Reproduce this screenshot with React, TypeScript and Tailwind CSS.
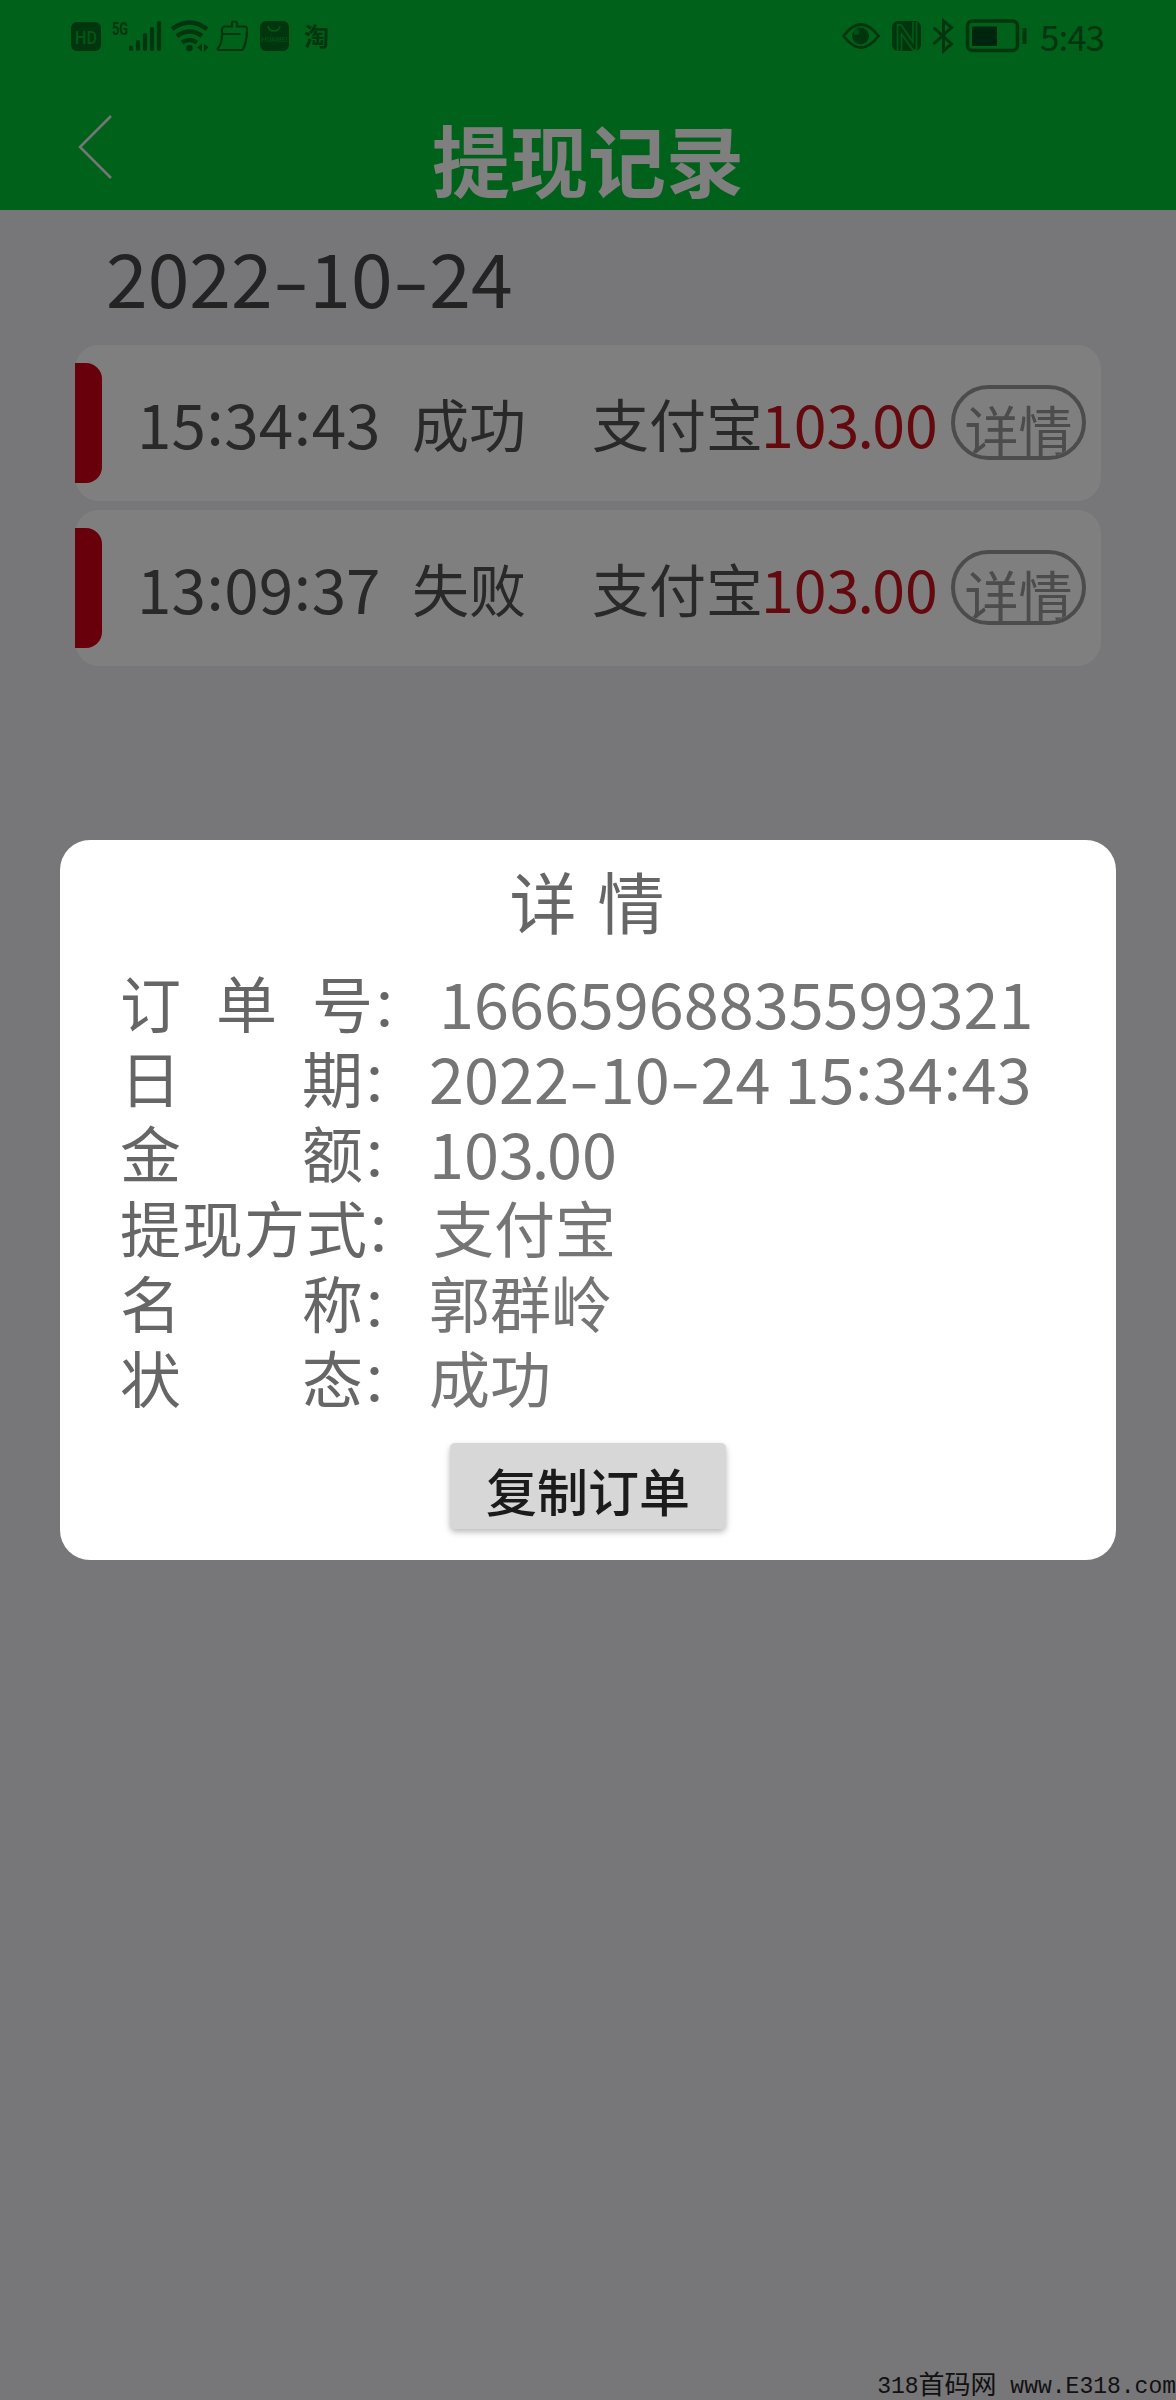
import React from "react";

const records = [
  { time: "15:34:43", status: "成功", method: "支付宝", amount: "103.00" },
  { time: "13:09:37", status: "失败", method: "支付宝", amount: "103.00" },
];

// Punctuation between digits gets its own width, and colons are raised
function Digits({ text }: { text: string }) {
  return (
    <>
      {text.split("").map((c, i) => {
        if (c === ":") {
          return (
            <span key={i} className="inline-block w-[18.5px] text-center align-[0.06em] leading-none">
              :
            </span>
          );
        }
        if (c === ".") {
          return (
            <span key={i} className="inline-flex w-[13px] justify-center leading-none">
              .
            </span>
          );
        }
        if (c === "-") {
          return (
            <span key={i} className="inline-block w-[0.49em] text-center leading-none">
              <span className="inline-block scale-x-140">-</span>
            </span>
          );
        }
        return <span key={i}>{c}</span>;
      })}
    </>
  );
}

function StatusBar() {
  return (
    <div className="flex h-[72px] items-center justify-between pl-[71px] pr-[72px] text-[#006a1a]">
      <svg width="262" height="40" viewBox="71 16 262 40" fill="none" stroke="currentColor">
        <rect x="71" y="22" width="30" height="29" rx="6" fill="currentColor" stroke="none" />
        <text x="86" y="43.500" textAnchor="middle" fontSize="19" fontFamily="Roboto, sans-serif" fontWeight="500" textLength="22" lengthAdjust="spacingAndGlyphs" fill="#00b02f" stroke="none">
          HD
        </text>
        <text x="112" y="35" fontSize="19" fontFamily="Roboto, sans-serif" fontWeight="700" textLength="16" lengthAdjust="spacingAndGlyphs" fill="currentColor" stroke="none">
          5G
        </text>
        <path d="M131 47.500v1.500M138 42v7M145 35v14M152 29v20M159 23v26" strokeWidth="4.200" strokeLinecap="round" />
        <g strokeWidth="4.500">
          <path d="M172 29q17.500 -13 35 0" />
          <path d="M177 36q12.500 -9 25 0" />
          <path d="M182 42.500q7.500 -5 15 0" />
        </g>
        <circle cx="189.500" cy="48" r="3.300" fill="currentColor" stroke="none" />
        <path d="M202 43.500v8l-5 -4zM204 43.500v8l4.500 -4z" fill="currentColor" stroke="none" />
        <path
          d="M225 26.500h7v-3q0 -2 2 -2h1q2 0 2 2v3h8q2 0 2 3c0 9 -1 15 -4.500 20.500h-23q-3 0 -1.500 -2c3 -3 4 -7 4 -13v-5q0 -3.500 3 -3.500zM222.500 34h18"
          strokeWidth="2.200"
        />
        <rect x="260" y="21" width="29" height="30" rx="6" fill="currentColor" stroke="none" />
        <path d="M268 26q1 5 6 5t6 -5" stroke="#00b02f" strokeWidth="1.500" />
        <text x="274.500" y="41.500" textAnchor="middle" fontSize="7" fontFamily="Roboto, sans-serif" textLength="26" lengthAdjust="spacingAndGlyphs" fill="#00b02f" stroke="none">
          HUAWEI
        </text>
        <text x="304" y="45.500" fontSize="25" fontWeight="700" fontFamily="'Noto Sans CJK SC', sans-serif" fill="currentColor" stroke="none">
          淘
        </text>
      </svg>
      <div className="flex items-center">
        <svg width="188" height="40" viewBox="843 16 188 40" fill="none" stroke="currentColor">
          <path d="M844.500 36q17.500 -23 35 0q-17.500 23 -35 0z" strokeWidth="2.800" />
          <circle cx="861.500" cy="36" r="8.500" fill="currentColor" stroke="none" />
          <circle cx="857.500" cy="32" r="3" fill="#00a02a" stroke="none" />
          <rect x="893" y="21" width="29" height="30" rx="6" fill="currentColor" stroke="none" />
          <path d="M898.500 51v-26h3.500l12 17v-20M902.500 51v-17l11.500 16h3.500v-28" stroke="#00b02f" strokeWidth="1.800" />
          <path d="M934.500 27.500l18 16.500l-8 7v-30l8 6.500l-18 16.500" strokeWidth="3" />
          <rect x="968.500" y="21" width="50" height="29.500" rx="5" strokeWidth="3.500" />
          <rect x="973" y="26.500" width="25" height="19.500" fill="#004a1c" stroke="none" />
          <path d="M1025.500 28v16" strokeWidth="4" />
        </svg>
        <div className="ml-2.5 w-[64px] whitespace-nowrap text-[35px] leading-[38px] tracking-[-1px]">5:43</div>
      </div>
    </div>
  );
}

function Header() {
  return (
    <div className="h-[210px] bg-[#00c234]">
      <StatusBar />
      <div className="grid grid-cols-3 pl-[78px] pr-[78px]">
        <svg width="34" height="64" viewBox="0 0 34 64" className="mt-[43px]" fill="none" stroke="#e8f0e8" strokeWidth="2.500">
          <path d="M33 1L2 32L33 63" />
        </svg>
        <h1 className="mt-[31px] flex justify-center whitespace-nowrap text-[78px] font-bold leading-[110px] text-white">
          提现记录
        </h1>
      </div>
    </div>
  );
}

function RecordRow({ record }: { record: (typeof records)[number] }) {
  return (
    <div className="flex h-[156px] items-center rounded-[24px] bg-white text-[#525254]">
      <div className="h-[120px] w-[27px] rounded-r-[16px] bg-[#d00018]" />
      <div className="-mt-[2px] ml-[35px] w-[275px] whitespace-nowrap text-[62px] leading-[90px]">
        <Digits text={record.time} />
      </div>
      <div className="-mt-[2px] w-[180px] whitespace-nowrap text-[57px] leading-[90px]">{record.status}</div>
      <div className="-mt-[2px] w-[169px] whitespace-nowrap text-[57px] leading-[90px]">{record.method}</div>
      <div className="-mt-[1px] w-[190px] whitespace-nowrap text-[59px] leading-[90px] text-[#c8141e]">
        <Digits text={record.amount} />
      </div>
      <button className="-mt-[2px] flex h-[75px] w-[135px] justify-center overflow-hidden rounded-full border-4 border-[#98989a] text-[54px] leading-[79px] text-[#98989a]">
        详情
      </button>
    </div>
  );
}

function DetailRow({ label, width, children }: { label: string; width: string; children: React.ReactNode }) {
  return (
    <div className="flex h-[75px] items-center whitespace-nowrap leading-[75px]">
      <div className={`flex justify-between text-[61px] text-[#666666] ${width}`}>
        {label.split("").map((c) => (
          <span key={c}>{c}</span>
        ))}
      </div>
      <div className="-ml-[2px] mt-[3px] w-[68px] text-[54px] text-[#666666]">：</div>
      <div className="text-[#757575]">{children}</div>
    </div>
  );
}

function DetailDialog() {
  return (
    <div className="absolute inset-0 bg-black/50 pt-[840px]">
      <div className="mx-[60px] flex h-[720px] flex-col rounded-[30px] bg-white pl-[60px]">
        <div className="mr-[62px] flex justify-center gap-[21px] pt-[10px] text-[67px] leading-[100px] text-[#666666]">
          <span>详</span>
          <span>情</span>
        </div>
        <div className="mt-[14px] text-[61px]">
          <DetailRow label="订单号" width="w-[253px]">
            <span className="text-[63px]">16665968835599321</span>
          </DetailRow>
          <DetailRow label="日期" width="w-[243px]">
            <span className="text-[63px]">
              <Digits text="2022-10-24 15:34:43" />
            </span>
          </DetailRow>
          <DetailRow label="金额" width="w-[243px]">
            <span className="text-[63px]">
              <Digits text="103.00" />
            </span>
          </DetailRow>
          <DetailRow label="提现方式" width="w-[247px]">
            支付宝
          </DetailRow>
          <DetailRow label="名称" width="w-[243px]">
            郭群岭
          </DetailRow>
          <DetailRow label="状态" width="w-[243px]">
            成功
          </DetailRow>
        </div>
        <button className="ml-[330px] mt-[29px] h-[86px] w-[276px] rounded-[5px] bg-[#d7d7d7] pt-[8px] text-[51px] font-medium leading-[76px] text-[#1b1b1b] shadow-[0_3px_6px_rgba(0,0,0,0.28)]">
          复制订单
        </button>
      </div>
    </div>
  );
}

export default function App() {
  return (
    <div className="relative h-[2400px] w-[1176px] overflow-hidden bg-[#eeedf2] font-['Noto_Sans_CJK_SC',sans-serif]">
      <Header />
      <div className="h-[135px] pl-[106px] pt-[11px] text-[75px] leading-[110px] text-[#484649]">
        <Digits text="2022-10-24" />
      </div>
      <div className="ml-[75px] flex w-[1026px] flex-col gap-[9px]">
        {records.map((r) => (
          <RecordRow key={r.time} record={r} />
        ))}
      </div>
      <DetailDialog />
      <div className="absolute bottom-0 right-0 flex items-center whitespace-pre font-['Liberation_Mono','Noto_Sans_CJK_SC',monospace] text-[23px] leading-[25px] text-[#111111]">
        318<span className="text-[26px]">首码网</span> www.E318.com
      </div>
    </div>
  );
}
